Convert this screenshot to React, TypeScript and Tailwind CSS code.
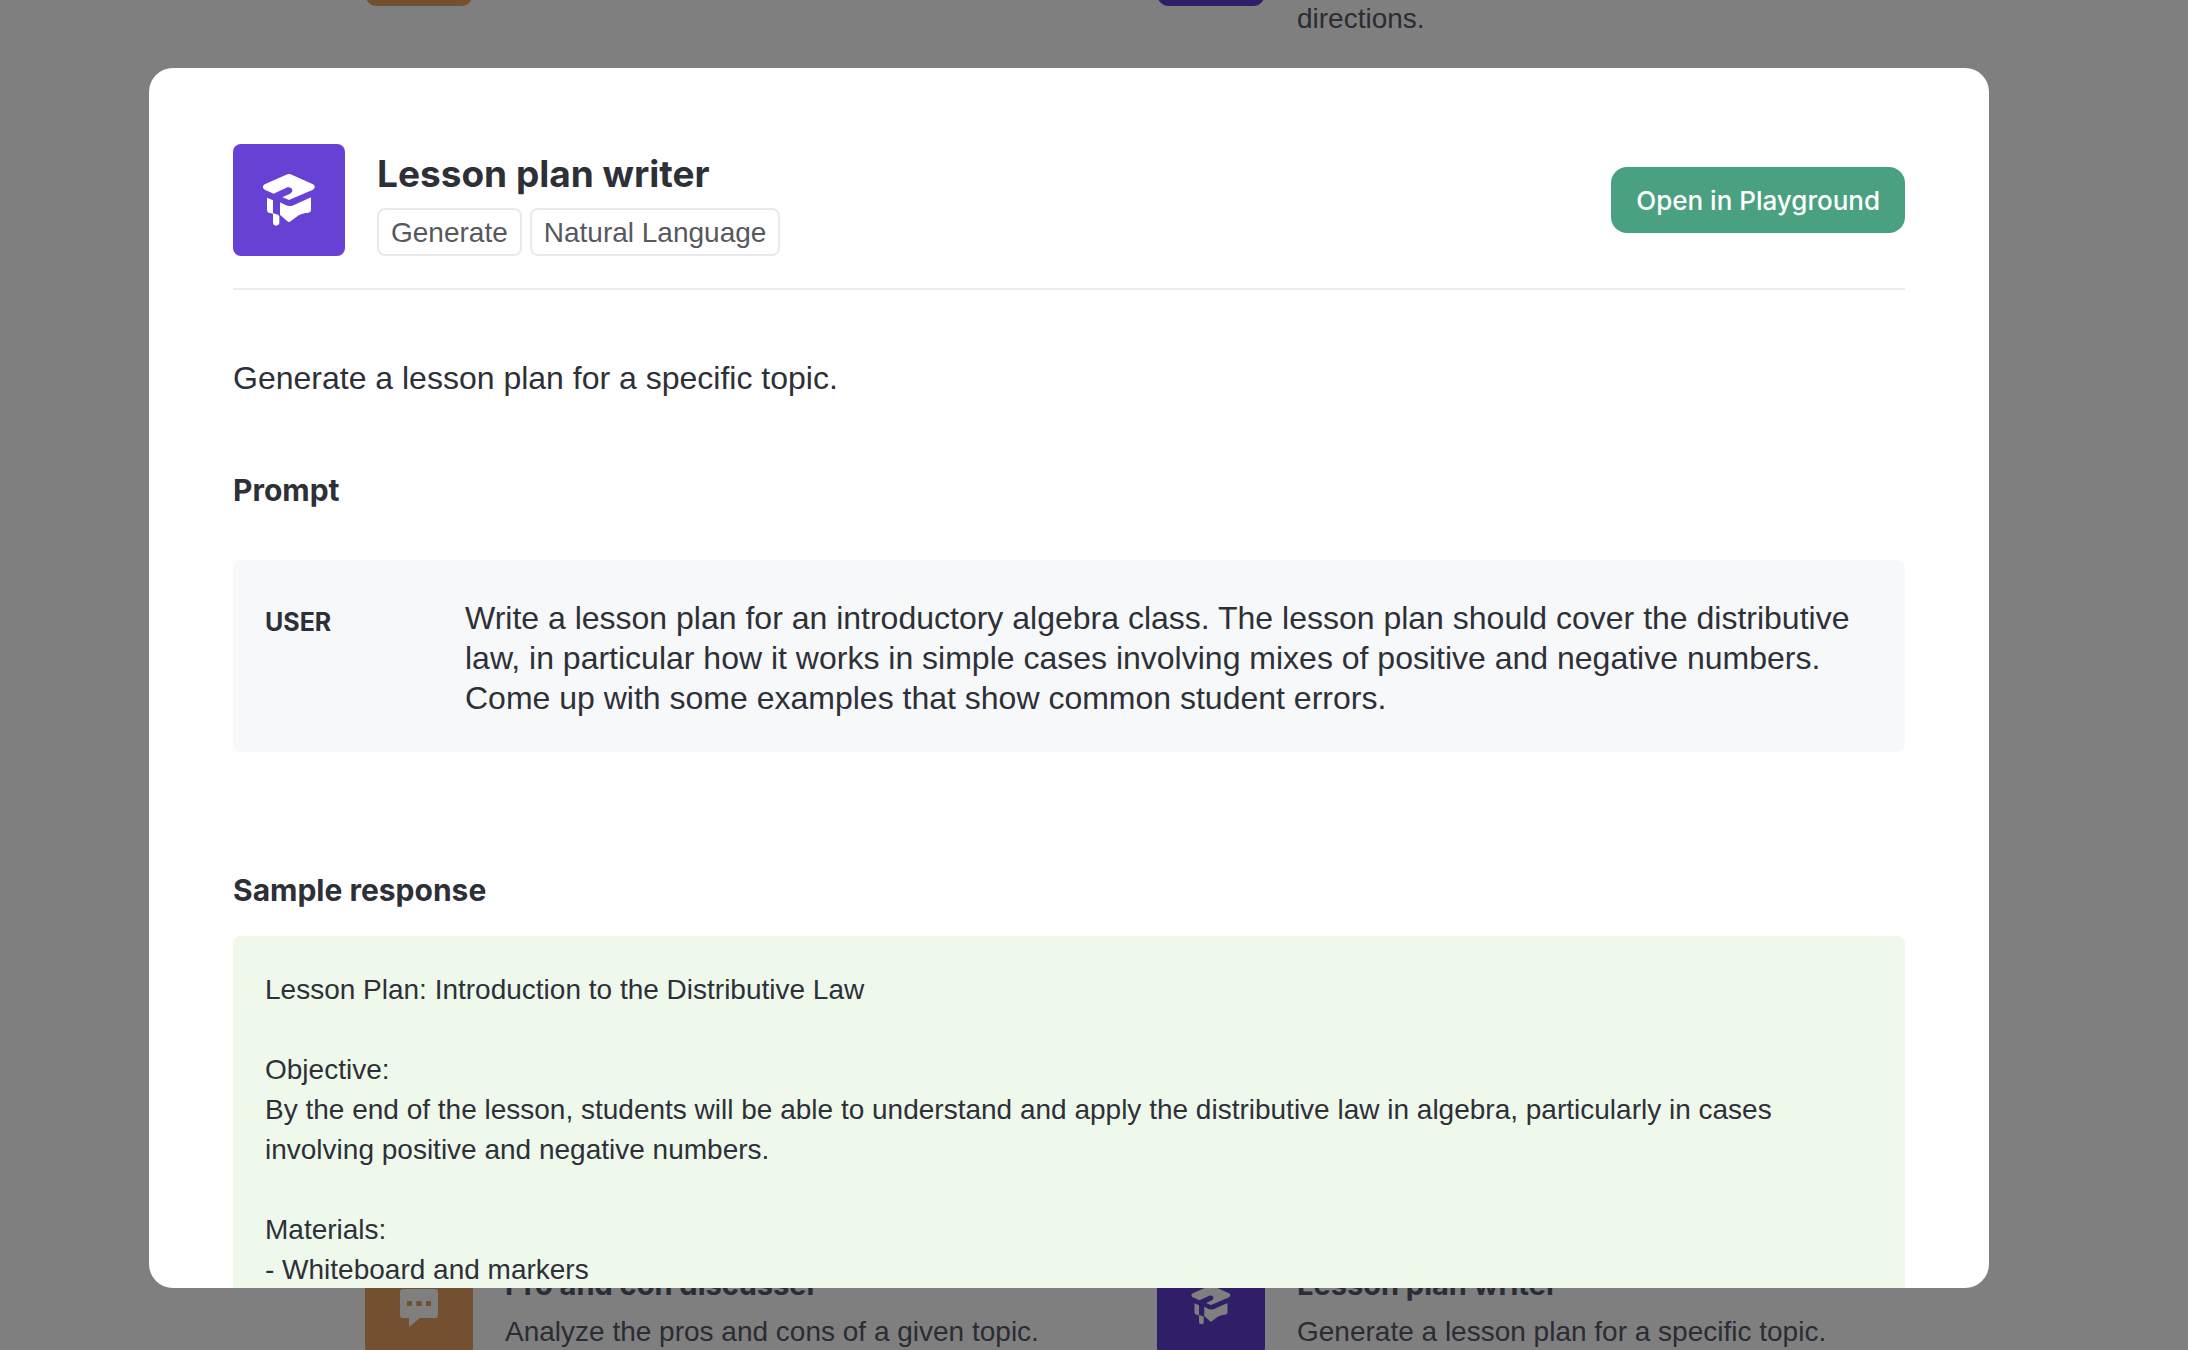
type IconProps = { className: string };

function CapIcon({ className }: IconProps) {
  return (
    <svg viewBox="9 12 216 216" fill="currentColor" aria-hidden="true" className={className}>
      <path d="M112 43Q117 41 122 43L189 73Q200 81 189 89L122 118Q117 121 112 118L97 112L120 101Q128 97 127 90Q124 80 112 82L71 101L44 89Q33 81 44 73Z" />
      <path d="M90 127L108 136Q117 140 127 137L183 112V150Q183 157 176 158Q150 160 136 173L122 184Q117 188 112 184L100 173Q94 167 90 165Z" />
      <path d="M51 113L69 121V161L56 158Q51 156 51 150Z" />
      <path d="M69 160Q80 162 88 168V187Q88 197 78 197Q69 197 69 187Z" />
    </svg>
  );
}

function ChatIcon({ className }: IconProps) {
  return (
    <svg viewBox="6 -18 162 162" fill="currentColor" aria-hidden="true" className={className}>
      <path
        fillRule="evenodd"
        d="M40 15H134Q144 15 144 25V92Q144 102 134 102H90L57 129V102H40Q30 102 30 92V25Q30 15 40 15ZM51 51V66H66V51ZM79 51V66H95V51ZM108 51V66H123V51Z"
      />
    </svg>
  );
}

type Example = { title: string; text: string; icon: 'cap' | 'chat' };

function ExampleCard({ title, text, icon }: Example) {
  const tile = icon === 'cap' ? 'bg-[#623cd0]' : 'bg-[#e4a060]';
  return (
    <a href="#" className="flex items-start gap-8">
      <span className={`flex size-[108px] shrink-0 items-center justify-center rounded-xl text-white ${tile}`}>
        {icon === 'cap' ? <CapIcon className="size-[54px]" /> : <ChatIcon className="size-[54px]" />}
      </span>
      <span className="flex flex-col gap-[7px] pt-3.5 text-[#565869]">
        <span className="font-['Inter',sans-serif] text-[29px] font-bold leading-10">{title}</span>
        <span className="text-[28px] leading-10">{text}</span>
      </span>
    </a>
  );
}

const rows: Example[][] = [
  [
    { title: 'Interview questions', text: 'Create interview questions.', icon: 'chat' },
    { title: 'Turn by turn directions', text: 'Convert natural language to turn-by-turn directions.', icon: 'cap' },
  ],
  [
    { title: 'Pro and con discusser', text: 'Analyze the pros and cons of a given topic.', icon: 'chat' },
    { title: 'Lesson plan writer', text: 'Generate a lesson plan for a specific topic.', icon: 'cap' },
  ],
];

const response = `Lesson Plan: Introduction to the Distributive Law

Objective:
By the end of the lesson, students will be able to understand and apply the distributive law in algebra, particularly in cases involving positive and negative numbers.

Materials:
- Whiteboard and markers`;

export default function App() {
  return (
    <div className="flex h-screen flex-col overflow-hidden bg-white font-['Liberation_Sans',Arial,sans-serif] text-[#2e3038]">
      <main className="-mt-[102px] -mb-[9px] flex flex-1 flex-col justify-between pr-[279px] pl-[365px]">
        {rows.map((row, i) => (
          <div key={i} className="grid grid-cols-2 gap-x-10">
            {row.map((example) => (
              <ExampleCard key={example.title} {...example} />
            ))}
          </div>
        ))}
      </main>

      <div className="fixed inset-0 flex bg-black/50 pt-[68px] pr-[199px] pb-[62px] pl-[149px]">
        <div
          role="dialog"
          aria-modal="true"
          aria-labelledby="example-title"
          className="min-w-0 flex-1 overflow-y-auto rounded-3xl bg-white px-[84px] pt-[76px] [scrollbar-width:none]"
        >
          <header className="flex items-center gap-8 border-b-2 border-[#ececee] pb-8">
            <div className="flex size-28 shrink-0 items-center justify-center rounded-lg bg-[#6741d3] text-white">
              <CapIcon className="size-[72px]" />
            </div>
            <div className="flex flex-1 flex-col gap-3 self-end">
              <h2 id="example-title" className="font-['Inter',sans-serif] text-[37px] font-bold leading-[44px]">
                Lesson plan writer
              </h2>
              <div className="flex gap-2 text-[28px] leading-[42px] text-[#56585f]">
                <span className="rounded-lg border-2 border-[#e8ebeb] px-3 pt-0.5">Generate</span>
                <span className="rounded-lg border-2 border-[#e8ebeb] px-3 pt-0.5">Natural Language</span>
              </div>
            </div>
            <button
              type="button"
              className="h-[66px] rounded-2xl bg-[#4aa181] px-[25px] font-['Inter',sans-serif] text-[26px] font-medium text-white"
            >
              Open in Playground
            </button>
          </header>

          <p className="mt-[68px] text-[32px] leading-10">Generate a lesson plan for a specific topic.</p>

          <h3 className="mt-[72px] font-['Inter',sans-serif] text-[30px] font-bold leading-10">Prompt</h3>
          <div className="mt-[50px] flex rounded-lg bg-[#f7f8fa] px-8 pt-[38px] pb-[34px]">
            <div className="w-[200px] shrink-0 pt-1 font-['Inter',sans-serif] text-[25px] font-bold leading-10">
              USER
            </div>
            <p className="text-[32px] leading-10">
              Write a lesson plan for an introductory algebra class. The lesson plan should cover the distributive law, in
              particular how it works in simple cases involving mixes of positive and negative numbers. Come up with some
              examples that show common student errors.
            </p>
          </div>

          <h3 className="mt-[118px] font-['Inter',sans-serif] text-[30px] font-bold leading-10">Sample response</h3>
          <div className="mt-[26px] rounded-lg bg-[#eef9ec] px-8 pt-[34px] pb-8 text-[28px] leading-10 whitespace-pre-line">
            {response}
          </div>
        </div>
      </div>
    </div>
  );
}
